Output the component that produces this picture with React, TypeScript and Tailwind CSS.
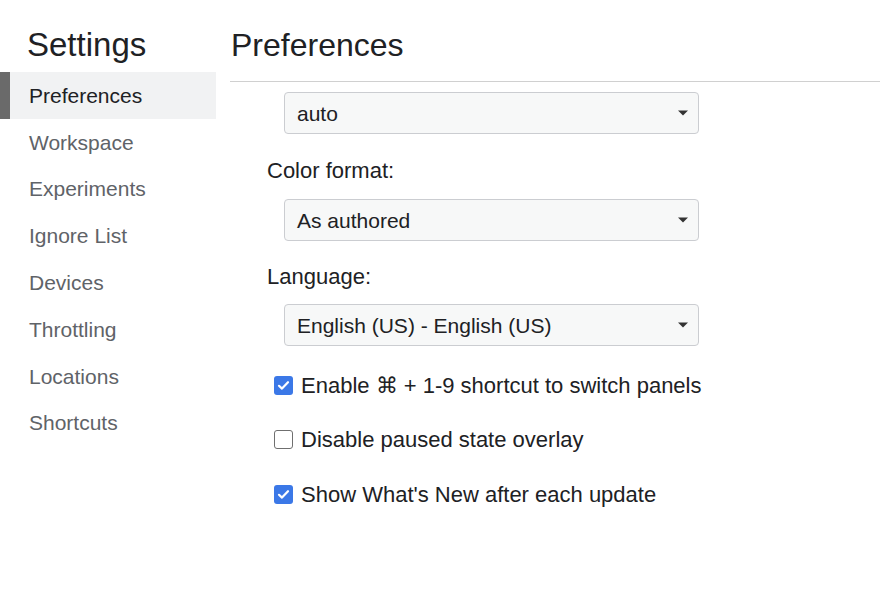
import { useState } from 'react';

const tabs = [
  'Preferences',
  'Workspace',
  'Experiments',
  'Ignore List',
  'Devices',
  'Throttling',
  'Locations',
  'Shortcuts'
];

const Select = ({ value }: { value: string }) => (
  <div className="ml-[17px] flex h-[42px] w-[415px] items-center justify-between rounded-[4px] border border-[#cbcdd1] bg-[#f7f8f8] pl-[12px] pr-[8px] text-[21px] text-[#202124]">
    <span className="pt-[2px]">{value}</span>
    <svg width="14" height="8" viewBox="0 0 14 8">
      <path d="M2 1.5 L12 1.5 L7 6.5 Z" fill="#333" />
    </svg>
  </div>
);

const Checkbox = ({
  label,
  checked,
  onToggle
}: {
  label: string;
  checked: boolean;
  onToggle: () => void;
}) => (
  <label
    className="flex h-[30px] cursor-pointer items-center gap-[8px] text-[22px] text-[#202124]"
    onClick={onToggle}
  >
    {checked ? (
      <span className="flex h-[19px] w-[19px] items-center justify-center rounded-[3px] bg-[#3b78e7]">
        <svg width="13" height="11" viewBox="0 0 13 11">
          <path
            d="M2 5.8 L5 8.6 L11 2.2"
            stroke="white"
            strokeWidth="2.2"
            fill="none"
            strokeLinecap="round"
            strokeLinejoin="round"
          />
        </svg>
      </span>
    ) : (
      <span className="h-[19px] w-[19px] rounded-[3px] border-[1.5px] border-[#6f6f6f] bg-white" />
    )}
    <span>{label}</span>
  </label>
);

const App = () => {
  const [active, setActive] = useState('Preferences');
  const [checks, setChecks] = useState([true, false, true]);

  const toggle = (i: number) =>
    setChecks(checks.map((c, idx) => (idx == i ? !c : c)));

  return (
    <div
      className="flex h-[590px] w-[880px] overflow-hidden bg-white"
      style={{ fontFamily: '"Liberation Sans", Arial, sans-serif' }}
    >
      {/* sidebar */}
      <div className="w-[216px] shrink-0">
        <div className="pl-[27px] pt-[22px] text-[33px] leading-[46px] text-[#202124]">
          Settings
        </div>
        <div className="mt-[4px] flex flex-col">
          {tabs.map((t) => (
            <div
              key={t}
              onClick={() => setActive(t)}
              className={
                active == t
                  ? 'flex h-[47px] cursor-pointer items-center border-l-[10px] border-[#6a6a6a] bg-[#f1f2f3] pl-[19px] text-[21px] text-[#202124]'
                  : 'flex h-[46.8px] cursor-pointer items-center pl-[29px] text-[21px] text-[#5f6368]'
              }
            >
              {t}
            </div>
          ))}
        </div>
      </div>

      {/* main */}
      <div className="flex-1 pl-[14px]">
        <div className="border-b border-[#d0d0d0] pb-[13px] pl-[1px] pt-[22px] text-[32px] leading-[46px] text-[#202124]">
          Preferences
        </div>
        <div className="flex flex-col pl-[37px] pt-[10px]">
          <Select value="auto" />
          <div className="mt-[22px] text-[22px] leading-[30px] text-[#202124]">
            Color format:
          </div>
          <div className="mt-[13px]">
            <Select value="As authored" />
          </div>
          <div className="mt-[21px] text-[22px] leading-[30px] text-[#202124]">
            Language:
          </div>
          <div className="mt-[12px]">
            <Select value="English (US) - English (US)" />
          </div>
          <div className="mt-[24px] flex flex-col gap-[24.5px] pl-[7px]">
            <Checkbox
              label="Enable ⌘ + 1-9 shortcut to switch panels"
              checked={checks[0]}
              onToggle={() => toggle(0)}
            />
            <Checkbox
              label="Disable paused state overlay"
              checked={checks[1]}
              onToggle={() => toggle(1)}
            />
            <Checkbox
              label="Show What's New after each update"
              checked={checks[2]}
              onToggle={() => toggle(2)}
            />
          </div>
        </div>
      </div>
    </div>
  );
};

export default App;
